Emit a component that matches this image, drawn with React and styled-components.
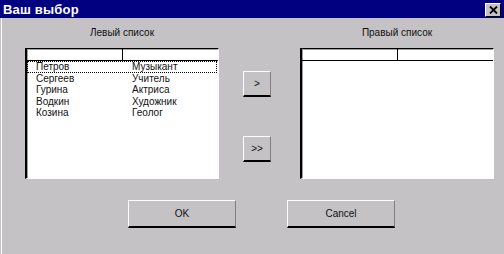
import React from 'react';
import styled, { createGlobalStyle } from 'styled-components';

const GlobalStyle = createGlobalStyle`
  html, body {
    margin: 0;
    padding: 0;
    background: #c4c2c4;
  }
  * {
    box-sizing: border-box;
  }
`;

const Window = styled.div`
  width: 504px;
  height: 254px;
  background: #c4c2c4;
  display: flex;
  flex-direction: column;
  font-family: "Liberation Sans", Arial, sans-serif;
  overflow: hidden;
`;

const TitleBar = styled.div`
  height: 18px;
  background: #000080;
  display: flex;
  align-items: center;
  justify-content: space-between;
  padding: 0 3px 0 3px;
`;

const Title = styled.div`
  color: #fff;
  font-weight: bold;
  font-size: 13px;
  letter-spacing: 0.2px;
`;

const CloseButton = styled.div`
  width: 16px;
  height: 14px;
  margin-top: 1px;
  background: #c4c2c4;
  border-top: 1px solid #fff;
  border-left: 1px solid #fff;
  border-right: 1px solid #000;
  border-bottom: 1px solid #000;
  display: flex;
  align-items: center;
  justify-content: center;
`;

const Body = styled.div`
  flex: 1;
  border-left: 1px solid #fff;
  margin-left: 1px;
  display: flex;
  flex-direction: column;
  padding: 9px 0 0 23px;
`;

const ListsRow = styled.div`
  display: flex;
  align-items: flex-start;
`;

const ListColumn = styled.div`
  width: 194px;
  display: flex;
  flex-direction: column;
  align-items: center;
`;

const Caption = styled.div`
  font-size: 10px;
  line-height: 12px;
  height: 12px;
  color: #111;
  margin-bottom: 9px;
`;

const ListBox = styled.div`
  width: 194px;
  height: 131px;
  background: #fff;
  border-top: 1px solid #000;
  border-left: 2px solid #000;
  border-right: 1px solid #fff;
  border-bottom: 1px solid #fff;
  box-shadow: 1px 1px 0 #a0a0a0 inset;
`;

const Header = styled.div`
  display: grid;
  grid-template-columns: 96px 1fr;
  height: 12px;
  border-bottom: 1px solid #000;
`;

const HeaderCell = styled.div`
  border-right: ${(p) => (p.$divider ? '1px solid #000' : 'none')};
`;

const Row = styled.div`
  display: grid;
  grid-template-columns: 96px 1fr;
  height: 11.6px;
  line-height: 11.6px;
  font-size: 10px;
  color: #111;
  padding-left: 9px;
  margin-right: 1px;
  outline: ${(p) => (p.$focused ? '1px dotted #000' : 'none')};
  outline-offset: -1px;
`;

const Cell = styled.div`
  white-space: nowrap;
`;

const MiddleColumn = styled.div`
  width: 28px;
  margin: 44px 29px 0 24px;
  display: flex;
  flex-direction: column;
  gap: 39px;
`;

const Button = styled.div`
  width: ${(p) => p.$w}px;
  height: ${(p) => p.$h}px;
  background: #c4c2c4;
  border-top: 1px solid #fff;
  border-left: 1px solid #fff;
  border-right: 1px solid #808080;
  border-bottom: 2px solid #000;
  display: flex;
  align-items: center;
  justify-content: center;
  font-size: 10px;
  color: #111;
`;

const Footer = styled.div`
  display: flex;
  gap: 51px;
  margin: 21px 0 0 103px;
`;

const rows = [
  ['Петров', 'Музыкант'],
  ['Сергеев', 'Учитель'],
  ['Гурина', 'Актриса'],
  ['Водкин', 'Художник'],
  ['Козина', 'Геолог'],
];

export default function App() {
  return (
    <Window>
      <GlobalStyle />
      <TitleBar>
        <Title>Ваш выбор</Title>
        <CloseButton>
          <svg width="9" height="8" viewBox="0 0 9 8">
            <path d="M1 0.5 L8 7.5 M8 0.5 L1 7.5" stroke="#000" strokeWidth="1.8" />
          </svg>
        </CloseButton>
      </TitleBar>
      <Body>
        <ListsRow>
          <ListColumn>
            <Caption>Левый список</Caption>
            <ListBox>
              <Header>
                <HeaderCell $divider />
                <HeaderCell />
              </Header>
              {rows.map(([name, job], i) => (
                <Row key={name} $focused={i === 0}>
                  <Cell>{name}</Cell>
                  <Cell>{job}</Cell>
                </Row>
              ))}
            </ListBox>
          </ListColumn>
          <MiddleColumn>
            <Button $w={28} $h={26}>&gt;</Button>
            <Button $w={28} $h={26}>&gt;&gt;</Button>
          </MiddleColumn>
          <ListColumn>
            <Caption>Правый список</Caption>
            <ListBox>
              <Header>
                <HeaderCell $divider />
                <HeaderCell />
              </Header>
            </ListBox>
          </ListColumn>
        </ListsRow>
        <Footer>
          <Button $w={108} $h={28}>OK</Button>
          <Button $w={108} $h={28}>Cancel</Button>
        </Footer>
      </Body>
    </Window>
  );
}
